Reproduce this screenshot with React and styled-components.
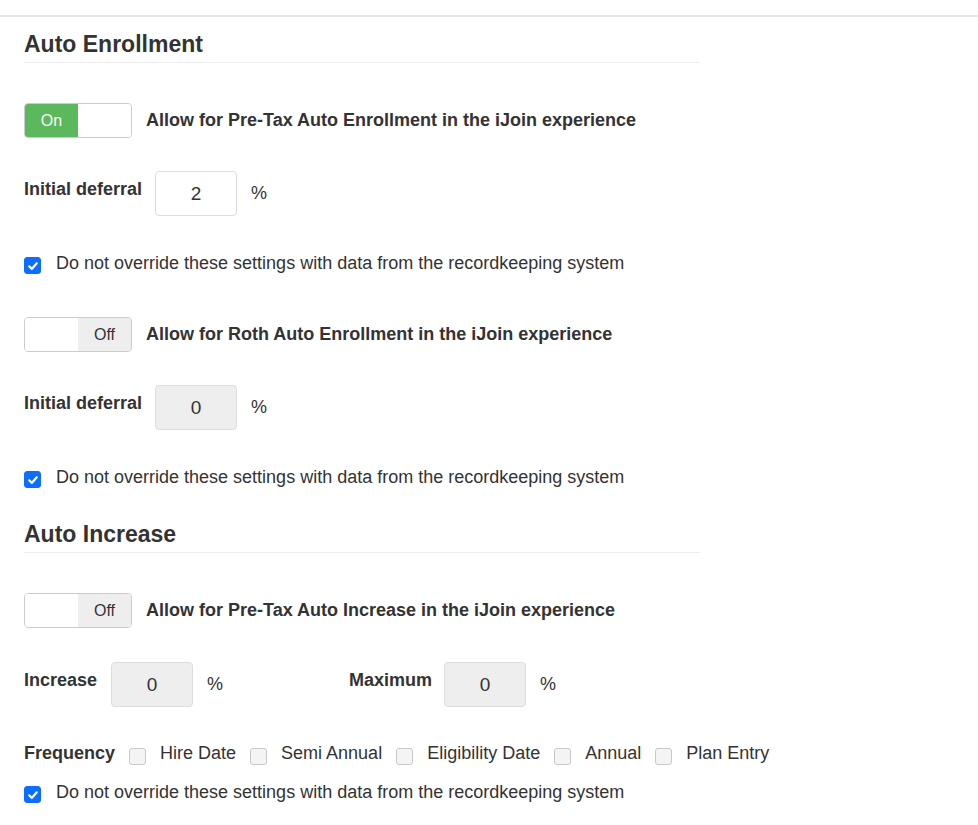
import React from "react";
import styled, { createGlobalStyle } from "styled-components";

const Global = createGlobalStyle`
  html, body { margin: 0; padding: 0; background: #fff; }
  body { font-family: "Liberation Sans", Arial, sans-serif; color: #333; font-size: 18px; }
`;

const TopBar = styled.div`
  height: 15px;
  border-bottom: 2px solid #e7e7e7;
`;

const Page = styled.div`
  padding: 14px 24px 20px 24px;
`;

const Heading = styled.h2`
  margin: ${(p) => p.$mt || 0}px 0 0 0;
  width: 676px;
  font-size: 23px;
  font-weight: bold;
  line-height: 26px;
  padding-bottom: 5px;
  border-bottom: 1px solid #eee;
  color: #333;
`;

const Row = styled.div`
  display: flex;
  align-items: ${(p) => p.$align || "center"};
  margin-top: ${(p) => p.$mt || 0}px;
  white-space: nowrap;
`;

const Toggle = styled.div`
  display: flex;
  width: 106px;
  height: 33px;
  border: 1px solid #ccc;
  border-radius: 4px;
  overflow: hidden;
  flex: none;
`;

const ToggleHalf = styled.div`
  width: 54px;
  display: flex;
  align-items: center;
  justify-content: center;
  font-size: 16px;
  background: ${(p) => p.$bg || "#fff"};
  color: ${(p) => p.$color || "#333"};
`;

const ToggleLabel = styled.span`
  font-weight: bold;
  font-size: 18px;
  margin-left: 14px;
`;

const FieldLabel = styled.span`
  font-weight: bold;
  font-size: 18px;
  line-height: 20px;
  padding-top: 8px;
  width: ${(p) => (p.$w ? p.$w + "px" : "auto")};
  margin-left: ${(p) => p.$ml || 0}px;
  flex: none;
`;

const NumInput = styled.div`
  width: 80px;
  height: 43px;
  border: 1px solid #ddd;
  border-radius: 4px;
  background: ${(p) => (p.$disabled ? "#eee" : "#fff")};
  display: flex;
  align-items: center;
  justify-content: center;
  font-size: 19px;
  color: #333;
  flex: none;
`;

const Percent = styled.span`
  font-size: 18px;
  margin-left: 14px;
  padding-top: 12px;
  line-height: 20px;
`;

const CheckBox = styled.span`
  width: 15px;
  height: 15px;
  border-radius: 3px;
  flex: none;
  display: inline-flex;
  align-items: center;
  justify-content: center;
  border: 1px solid ${(p) => (p.$checked ? "#0d6efd" : "#c8c8c8")};
  background: ${(p) => (p.$checked ? "#0d6efd" : "#f4f4f4")};
  margin-top: ${(p) => p.$mt || 0}px;
`;

const CheckText = styled.span`
  font-size: 18px;
  line-height: 20px;
  margin-left: ${(p) => p.$ml || 15}px;
  margin-right: ${(p) => p.$mr || 0}px;
`;

const FreqLabel = styled.span`
  font-weight: bold;
  font-size: 18px;
  line-height: 20px;
  margin-right: 14px;
`;

const Check = ({ checked, mt }) => (
  <CheckBox $checked={checked} $mt={mt}>
    {checked && (
      <svg width="12" height="12" viewBox="0 0 12 12">
        <path d="M2.2 6.3 L4.8 8.9 L9.8 3.3" fill="none" stroke="#fff" strokeWidth="2.2" strokeLinecap="round" strokeLinejoin="round" />
      </svg>
    )}
  </CheckBox>
);

const OverrideRow = ({ mt }) => (
  <Row $mt={mt} $align="flex-start">
    <Check checked mt={4} />
    <CheckText>Do not override these settings with data from the recordkeeping system</CheckText>
  </Row>
);

const Switch = ({ on }) => (
  <Toggle>
    {on ? (
      <>
        <ToggleHalf $bg="#5cb85c" $color="#fff">On</ToggleHalf>
        <ToggleHalf />
      </>
    ) : (
      <>
        <ToggleHalf />
        <ToggleHalf $bg="#eee">Off</ToggleHalf>
      </>
    )}
  </Toggle>
);

const frequencies = ["Hire Date", "Semi Annual", "Eligibility Date", "Annual", "Plan Entry"];

export default function App() {
  return (
    <>
      <Global />
      <TopBar />
      <Page>
        <Heading>Auto Enrollment</Heading>
        <Row $mt={40}>
          <Switch on />
          <ToggleLabel>Allow for Pre-Tax Auto Enrollment in the iJoin experience</ToggleLabel>
        </Row>
        <Row $mt={33} $align="flex-start">
          <FieldLabel $w={131}>Initial deferral</FieldLabel>
          <NumInput>2</NumInput>
          <Percent>%</Percent>
        </Row>
        <OverrideRow mt={37} />
        <Row $mt={43}>
          <Switch />
          <ToggleLabel>Allow for Roth Auto Enrollment in the iJoin experience</ToggleLabel>
        </Row>
        <Row $mt={33} $align="flex-start">
          <FieldLabel $w={131}>Initial deferral</FieldLabel>
          <NumInput $disabled>0</NumInput>
          <Percent>%</Percent>
        </Row>
        <OverrideRow mt={37} />
        <Heading $mt={33}>Auto Increase</Heading>
        <Row $mt={40}>
          <Switch />
          <ToggleLabel>Allow for Pre-Tax Auto Increase in the iJoin experience</ToggleLabel>
        </Row>
        <Row $mt={34} $align="flex-start">
          <FieldLabel $w={87}>Increase</FieldLabel>
          <NumInput $disabled>0</NumInput>
          <Percent>%</Percent>
          <FieldLabel $ml={126} $w={95}>Maximum</FieldLabel>
          <NumInput $disabled>0</NumInput>
          <Percent>%</Percent>
        </Row>
        <Row $mt={36} $align="flex-start">
          <FreqLabel>Frequency</FreqLabel>
          {frequencies.map((f, i) => (
            <React.Fragment key={f}>
              <Check mt={5} />
              <CheckText $ml={14} $mr={i < frequencies.length - 1 ? 14 : 0}>{f}</CheckText>
            </React.Fragment>
          ))}
        </Row>
        <OverrideRow mt={17} />
      </Page>
    </>
  );
}
